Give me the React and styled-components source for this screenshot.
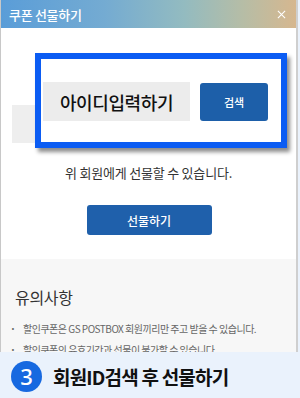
import React from "react";
import styled, { createGlobalStyle } from "styled-components";

const GlobalStyle = createGlobalStyle`
  html, body { margin: 0; padding: 0; background: #eaf2fc; }
  body { font-family: "Noto Sans CJK KR", "Noto Sans", sans-serif; }
  * { box-sizing: border-box; }
`;

const Screen = styled.div`
  width: 300px;
  height: 398px;
  overflow: hidden;
  display: flex;
  flex-direction: column;
  background: #eaf2fc;
`;

const Modal = styled.div`
  position: relative;
  width: 298px;
  height: 352px;
  flex: none;
  background: #fff;
  border-left: 1px solid #c8c8c8;
  border-right: 2px solid #cfcfcf;
  overflow: hidden;
  display: flex;
  flex-direction: column;
  & > * { flex-shrink: 0; }
`;

const Header = styled.div`
  height: 28px;
  display: flex;
  align-items: center;
  justify-content: space-between;
  padding: 0 8px 0 8px;
  background: linear-gradient(90deg, #5a9dd8 0%, #74abd2 35%, #93bbc0 62%, #b6bda6 82%, #d6b78f 100%);
  color: #fff;
`;

const Title = styled.span`
  font-size: 13px;
  font-weight: 500;
  letter-spacing: -0.3px;
`;

const Close = styled.svg`
  width: 9px;
  height: 9px;
  margin-right: 2px;
`;

const SearchRow = styled.div`
  margin-top: 77px;
  padding-left: 11px;
  display: flex;
  gap: 10px;
`;

const BaseInput = styled.div`
  width: 180px;
  height: 38px;
  background: #eeeeee;
`;

const Notice = styled.p`
  margin: 21px 0 0;
  text-align: center;
  font-size: 13px;
  line-height: 18px;
  color: #333;
  letter-spacing: -0.2px;
`;

const GiftButton = styled.button`
  align-self: center;
  margin-top: 23px;
  width: 125px;
  height: 30px;
  border: none;
  border-radius: 3px;
  background: #1f60ab;
  color: #fff;
  font-family: inherit;
  font-size: 12px;
  font-weight: 500;
  margin-left: 1px;
  padding: 0;
`;

const Caution = styled.section`
  margin-top: 24px;
  flex: 1;
  background: #f7f7f7;
  padding: 27px 14px 0;
`;

const CautionTitle = styled.h3`
  margin: 0;
  font-size: 16px;
  line-height: 22px;
  font-weight: 400;
  color: #333;
  letter-spacing: -0.3px;
`;

const List = styled.ul`
  margin: 13px 0 0;
  padding: 0;
  list-style: none;
`;

const Item = styled.li`
  position: relative;
  padding-left: 8px;
  font-size: 10px;
  line-height: 15px;
  color: #666;
  letter-spacing: -0.5px;
  margin-bottom: 6px;
  white-space: nowrap;
  &::before {
    content: "·";
    position: absolute;
    left: -5px;
    top: 0;
    font-weight: 700;
  }
`;

const Callout = styled.div`
  position: absolute;
  left: 34px;
  top: 53px;
  width: 252px;
  height: 95px;
  border: 6px solid #0b5cf3;
  background: #fff;
  box-shadow: 3px 4px 4px rgba(0, 0, 0, 0.45);
  display: flex;
  align-items: center;
  gap: 10px;
  padding: 0 12px 0 2px;
`;

const BigInput = styled.div`
  width: 147px;
  height: 39px;
  background: #ececec;
  display: flex;
  align-items: center;
  justify-content: center;
  font-size: 18px;
  font-weight: 500;
  color: #111;
  letter-spacing: -0.4px;
  margin-top: 2px;
`;

const SearchButton = styled.div`
  width: 68px;
  height: 38px;
  border-radius: 3px;
  background: #1d5fa9;
  color: #fff;
  display: flex;
  align-items: center;
  justify-content: center;
  font-size: 11px;
  font-weight: 500;
  margin-top: 2px;
`;

const Banner = styled.div`
  flex: 1;
  display: flex;
  align-items: center;
  gap: 11px;
  padding: 2px 0 0 11px;
`;

const StepBadge = styled.div`
  width: 31px;
  height: 31px;
  border-radius: 50%;
  background: #1769e0;
  color: #fff;
  display: flex;
  align-items: center;
  justify-content: center;
  font-size: 22px;
  font-weight: 500;
  font-family: "Noto Sans", sans-serif;
`;

const StepText = styled.span`
  font-size: 19px;
  font-weight: 700;
  color: #111;
  letter-spacing: -0.8px;
`;

export default function App() {
  return (
    <>
      <GlobalStyle />
      <Screen>
        <Modal>
          <Header>
            <Title>쿠폰 선물하기</Title>
            <Close viewBox="0 0 10 10">
              <path d="M1 1 L9 9 M9 1 L1 9" stroke="#fff" strokeWidth="1.2" fill="none" />
            </Close>
          </Header>
          <SearchRow>
            <BaseInput />
          </SearchRow>
          <Notice>위 회원에게 선물할 수 있습니다.</Notice>
          <GiftButton>선물하기</GiftButton>
          <Caution>
            <CautionTitle>유의사항</CautionTitle>
            <List>
              <Item>할인쿠폰은 GS POSTBOX 회원끼리만 주고 받을 수 있습니다.</Item>
              <Item>할인쿠폰의 유효기간과 선물이 불가할 수 있습니다.</Item>
            </List>
          </Caution>
          <Callout>
            <BigInput>아이디입력하기</BigInput>
            <SearchButton>검색</SearchButton>
          </Callout>
        </Modal>
        <Banner>
          <StepBadge>3</StepBadge>
          <StepText>회원ID검색 후 선물하기</StepText>
        </Banner>
      </Screen>
    </>
  );
}
